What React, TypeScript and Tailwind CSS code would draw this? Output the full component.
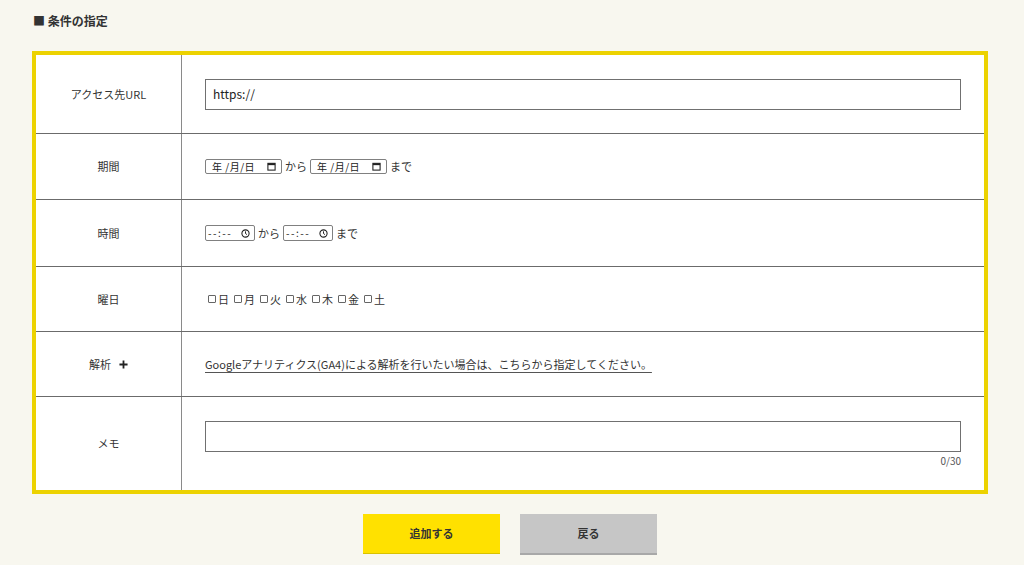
import React from 'react';

const font = { fontFamily: '"Noto Sans CJK JP", "Noto Sans", sans-serif' };

const Row = ({ label, height, children, last = false }: { label: React.ReactNode; height: string; children: React.ReactNode; last?: boolean }) => (
  <div className={`flex ${height} ${last ? '' : 'border-b border-[#6b6b6b]'}`}>
    <div className="w-[146px] shrink-0 border-r border-[#8a8a8a] flex items-center justify-center text-[11px] text-[#333]">
      {label}
    </div>
    <div className="flex-1 px-[23px] flex flex-col justify-center">{children}</div>
  </div>
);

const DateBox = () => (
  <span className="inline-flex items-center justify-between w-[77px] h-[15px] border border-[#808080] rounded-[2px] bg-white pl-[6px] pr-[5px] text-[10px] text-[#222] leading-none">
    <span className="whitespace-pre tracking-[0.5px]">年 /月/日</span>
    <svg width="9" height="9" viewBox="0 0 10 10">
      <rect x="1" y="1.5" width="8" height="7.5" fill="none" stroke="#222" strokeWidth="1.2" />
      <rect x="1" y="1.5" width="8" height="2" fill="#222" />
    </svg>
  </span>
);

const TimeBox = () => (
  <span className="inline-flex items-center justify-between w-[50px] h-[16px] border border-[#808080] rounded-[2px] bg-white pl-[2px] pr-[4px] text-[10px] text-[#222] leading-none">
    <span className="tracking-[1.5px]">--:--</span>
    <svg width="9" height="9" viewBox="0 0 10 10">
      <circle cx="5" cy="5" r="4" fill="none" stroke="#222" strokeWidth="1.2" />
      <path d="M5 2.6V5l1.6 1.2" fill="none" stroke="#222" strokeWidth="1.1" />
    </svg>
  </span>
);

const Check = ({ label }: { label: string }) => (
  <span className="inline-flex items-center gap-[2px] mr-[5px]">
    <span className="w-[8px] h-[8px] border border-[#666] rounded-[1px] bg-white" />
    <span>{label}</span>
  </span>
);

export default function App() {
  return (
    <div className="min-h-[565px] w-[1024px] bg-[#f8f7ef] pl-[32px] pr-[36px] pt-[12px]" style={font}>
      <h2 className="text-[12px] font-bold text-[#333] leading-[18px] pl-[1px]">■ 条件の指定</h2>
      <div className="mt-[21px] border-4 border-[#ecd200] bg-white">
        <Row label="アクセス先URL" height="h-[79px]">
          <div className="h-[31px] border border-[#707070] flex items-center px-[7px] text-[12px] text-[#222]">https://</div>
        </Row>
        <Row label="期間" height="h-[66px]">
          <div className="flex items-center gap-[3px] text-[11px] text-[#333]">
            <DateBox />
            <span>から</span>
            <DateBox />
            <span>まで</span>
          </div>
        </Row>
        <Row label="時間" height="h-[67px]">
          <div className="flex items-center gap-[3px] text-[11px] text-[#333]">
            <TimeBox />
            <span>から</span>
            <TimeBox />
            <span>まで</span>
          </div>
        </Row>
        <Row label="曜日" height="h-[65px]">
          <div className="flex items-center pl-[3px] text-[11px] text-[#333]">
            {['日', '月', '火', '水', '木', '金', '土'].map((d) => (
              <Check key={d} label={d} />
            ))}
          </div>
        </Row>
        <Row
          label={
            <span className="flex items-center gap-[8px]">
              解析
              <svg width="9" height="9" viewBox="0 0 10 10">
                <path d="M5 0.5v9M0.5 5h9" stroke="#222" strokeWidth="2" />
              </svg>
            </span>
          }
          height="h-[65px]"
        >
          <span className="text-[11px] text-[#333] underline underline-offset-[3px] decoration-[#555]">
            Googleアナリティクス(GA4)による解析を行いたい場合は、こちらから指定してください。
          </span>
        </Row>
        <Row label="メモ" height="h-[93px]" last>
          <div className="pt-[2px]">
            <div className="h-[31px] border border-[#707070] bg-white" />
            <div className="text-right text-[10px] text-[#555] mt-[1px]">0/30</div>
          </div>
        </Row>
      </div>
      <div className="flex justify-center gap-[20px] mt-[20px]">
        <button className="w-[137px] h-[39px] bg-[#ffe100] shadow-[0_1px_0_#d9c200] text-[11px] font-bold text-[#333]">追加する</button>
        <button className="w-[137px] h-[39px] bg-[#c6c6c6] shadow-[0_2px_0_#a8a8a8] text-[11px] font-bold text-[#333]">戻る</button>
      </div>
    </div>
  );
}
